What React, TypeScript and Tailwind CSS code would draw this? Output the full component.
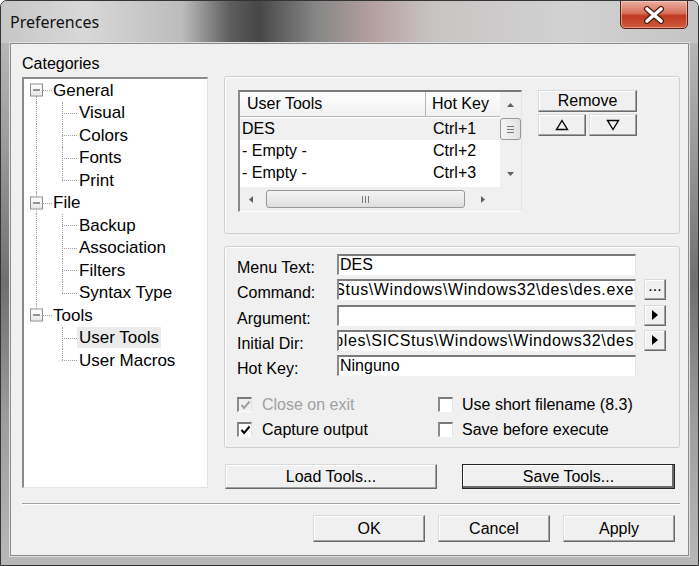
import React from "react";

type Dir = "up" | "down" | "left" | "right";

function Arrow({ dir, color = "#606060", size = 7 }: { dir: Dir; color?: string; size?: number }) {
  const h = Math.round(size * 0.57);
  if (dir === "up" || dir === "down") {
    const d = dir === "up" ? `M0 ${h}L${size / 2} 0L${size} ${h}Z` : `M0 0L${size / 2} ${h}L${size} 0Z`;
    return (
      <svg width={size} height={h} viewBox={`0 0 ${size} ${h}`} aria-hidden="true">
        <path d={d} fill={color} />
      </svg>
    );
  }
  const d = dir === "left" ? `M${h} 0L0 ${size / 2}L${h} ${size}Z` : `M0 0L${h} ${size / 2}L0 ${size}Z`;
  return (
    <svg width={h} height={size} viewBox={`0 0 ${h} ${size}`} aria-hidden="true">
      <path d={d} fill={color} />
    </svg>
  );
}

function Btn({
  children,
  className = "",
  isDefault = false,
}: {
  children: React.ReactNode;
  className?: string;
  isDefault?: boolean;
}) {
  const edge = isDefault
    ? "border border-[#262626] shadow-[inset_-2px_-2px_0_#6a6a6a,inset_1px_1px_0_#ffffff]"
    : "border border-t-[#dadada] border-l-[#dadada] border-r-[#6a6a6a] border-b-[#6a6a6a] shadow-[inset_-1px_-1px_0_#a0a0a0,inset_1px_1px_0_#ffffff]";
  return (
    <div className={`flex shrink-0 items-center justify-center bg-[#f0f0f0] text-[16px] text-black ${edge} ${className}`}>
      {children}
    </div>
  );
}

function Check({ checked, disabled = false }: { checked: boolean; disabled?: boolean }) {
  return (
    <span
      className={`flex h-[15px] w-[15px] shrink-0 items-center justify-center border-t-2 border-l-2 border-r border-b border-t-[#7a7a7a] border-l-[#8a8a8a] border-r-[#e3e3e3] border-b-[#ffffff] ${
        disabled ? "bg-[#f0f0f0]" : "bg-white"
      }`}
    >
      {checked ? (
        <svg width="11" height="10" viewBox="0 0 11 10" aria-hidden="true">
          <path
            d="M1.5 5 L4.2 8 L9.5 1.5"
            fill="none"
            stroke={disabled ? "#a0a0a0" : "#000"}
            strokeWidth="2"
          />
        </svg>
      ) : null}
    </span>
  );
}

function Field({ label, value, alignEnd = false, button }: { label: string; value: string; alignEnd?: boolean; button?: React.ReactNode }) {
  return (
    <div className="flex h-[25.25px] shrink-0 items-start">
      <div className="h-[24px] w-[112px] shrink-0 pl-[12px] pt-[3px] leading-[21px]">{label}</div>
      <div
        className={`flex h-[21px] w-[299px] shrink-0 items-center overflow-hidden whitespace-nowrap border-t-2 border-l-2 border-r border-b border-t-[#7a7a7a] border-l-[#8a8a8a] border-r-[#e3e3e3] border-b-[#ffffff] bg-white px-[1px] leading-none ${
          alignEnd ? "justify-end tracking-[0.6px]" : "justify-start"
        }`}
      >
        <span className="shrink-0">{value}</span>
      </div>
      {button ? <div className="ml-[8px]">{button}</div> : null}
    </div>
  );
}

const tree = [
  { label: "General", children: ["Visual", "Colors", "Fonts", "Print"] },
  { label: "File", children: ["Backup", "Association", "Filters", "Syntax Type"] },
  { label: "Tools", children: ["User Tools", "User Macros"] },
];

const dotV = "absolute w-0 border-l border-dotted border-[#a0a0a0]";
const dotH = "absolute top-1/2 h-0 border-t border-dotted border-[#a0a0a0]";

function TreeView() {
  return (
    <div className="mt-[3px] h-[411px] w-[186px] overflow-hidden border-t-2 border-l-2 border-r border-b border-t-[#8a8a8a] border-l-[#8a8a8a] border-r-[#e3e3e3] border-b-[#e3e3e3] bg-white text-[17px]">
      {tree.map((group, g) => {
        const lastGroup = g === tree.length - 1;
        return (
          <div key={group.label}>
            <div className="relative flex h-[22.5px] items-center pl-[29px]">
              {g === 0 ? <span className={`${dotV} left-[12px] top-[17px] bottom-0`} /> : null}
              {g > 0 && !lastGroup ? <span className={`${dotV} left-[12px] top-0 bottom-0`} /> : null}
              {lastGroup ? <span className={`${dotV} left-[12px] top-0 h-[5px]`} /> : null}
              <span className="absolute left-[6px] top-1/2 flex h-[13px] w-[13px] -translate-y-1/2 items-center justify-center border border-[#8f8f8f] bg-[linear-gradient(#ffffff,#e6e6e6)]">
                <span className="h-px w-[7px] bg-[#333]" />
              </span>
              <span className={`${dotH} left-[19px] w-[9px]`} />
              <span className="leading-none">{group.label}</span>
            </div>
            {group.children.map((child, i) => {
              const lastChild = i === group.children.length - 1;
              const selected = child === "User Tools";
              return (
                <div key={child} className="relative flex h-[22.5px] items-center pl-[53px]">
                  {!lastGroup ? <span className={`${dotV} left-[12px] top-0 bottom-0`} /> : null}
                  <span className={`${dotV} left-[38px] top-0 ${lastChild ? "h-1/2" : "bottom-0"}`} />
                  <span className={`${dotH} left-[38px] w-[15px]`} />
                  <span className={`flex h-[21px] items-center px-[2px] leading-none ${selected ? "bg-[#ebebeb]" : ""}`}>
                    {child}
                  </span>
                </div>
              );
            })}
          </div>
        );
      })}
    </div>
  );
}

function ListView() {
  const rows = [
    { name: "DES", key: "Ctrl+1", sel: true },
    { name: "- Empty -", key: "Ctrl+2", sel: false },
    { name: "- Empty -", key: "Ctrl+3", sel: false },
  ];
  return (
    <div className="flex h-[122px] w-[284px] shrink-0 flex-col border-t-2 border-l-2 border-r border-b border-t-[#7a7a7a] border-l-[#8a8a8a] border-r-[#e3e3e3] border-b-[#ffffff] bg-white">
      <div className="flex flex-1">
        <div className="flex w-[260px] flex-col overflow-hidden">
          <div className="flex h-[25px] shrink-0 border-b border-[#b5b5b5] bg-[linear-gradient(#ffffff,#f1f1f1)] leading-none">
            <div className="flex w-[186px] shrink-0 items-center border-r border-[#b5b5b5] pl-[7px]">User Tools</div>
            <div className="flex items-center whitespace-nowrap pl-[6px]">Hot Key</div>
          </div>
          <div className="mt-[1px]">
            {rows.map((r, i) => (
              <div key={i} className={`flex h-[22px] items-center leading-none ${r.sel ? "bg-[#f0f0f0]" : ""}`}>
                <div className="w-[187px] shrink-0 pl-[2px]">{r.name}</div>
                <div className="pl-[6px]">{r.key}</div>
              </div>
            ))}
          </div>
        </div>
        <div className="flex w-[21px] shrink-0 flex-col bg-[#f0f0f0]">
          <div className="flex h-[26px] items-center justify-center">
            <Arrow dir="up" />
          </div>
          <div className="flex h-[22px] items-center justify-center rounded-[3px] border border-[#979797] bg-[linear-gradient(90deg,#f5f5f5,#e1e1e1)]">
            <div className="flex flex-col gap-[2px]">
              <span className="h-px w-[7px] bg-[#7a7a7a]" />
              <span className="h-px w-[7px] bg-[#7a7a7a]" />
              <span className="h-px w-[7px] bg-[#7a7a7a]" />
            </div>
          </div>
          <div className="flex-1" />
          <div className="flex h-[26px] items-center justify-center">
            <Arrow dir="down" />
          </div>
        </div>
      </div>
      <div className="flex h-[24px] shrink-0 bg-[#f0f0f0]">
        <div className="flex w-[260px] items-center pr-[6px]">
          <div className="flex h-full w-[22px] items-center justify-center">
            <Arrow dir="left" />
          </div>
          <div className="ml-[4px] flex h-[18px] w-[199px] items-center justify-center rounded-[3px] border border-[#979797] bg-[linear-gradient(#f5f5f5,#dedede)]">
            <div className="flex gap-[2px]">
              <span className="h-[7px] w-px bg-[#7a7a7a]" />
              <span className="h-[7px] w-px bg-[#7a7a7a]" />
              <span className="h-[7px] w-px bg-[#7a7a7a]" />
            </div>
          </div>
          <div className="flex-1" />
          <div className="flex h-full w-[22px] items-center justify-center">
            <Arrow dir="right" />
          </div>
        </div>
        <div className="w-[21px] bg-[#f0f0f0]" />
      </div>
    </div>
  );
}

export default function App() {
  return (
    <div className="flex h-[566px] w-[699px] flex-col overflow-hidden rounded-t-[7px] border border-[#343434] bg-[linear-gradient(180deg,#c2c2c2_0%,#9c9c9c_25%,#6f6f6f_50%,#9e9e9e_75%,#b8b8b8_100%)] font-['Liberation_Sans',Arial,sans-serif] text-[16px] text-black">
      <div className="flex h-[42px] shrink-0 items-start justify-between bg-[linear-gradient(90deg,#c6c6c6_0%,#d8d8d8_12%,#bcbcbc_26%,#5c5c5c_33%,#474747_37%,#858585_45%,#b8a2a2_54%,#c8c4c4_62%,#d2d2d2_82%,#c4c4c4_100%)]">
        <div className="self-center pl-[9px] font-['Noto_Sans',sans-serif] text-[16px] leading-none text-[#111]">Preferences</div>
        <div className="-mt-px mr-[10px] flex h-[29px] w-[68px] items-center justify-center rounded-b-[5px] border border-[#5a1d12] bg-[linear-gradient(#eab0a2_0%,#d8705a_45%,#c13a22_55%,#cf5a3c_100%)] shadow-[inset_0_0_0_1px_rgba(255,220,210,0.5)]">
          <svg width="26" height="18" viewBox="0 0 26 18" aria-hidden="true">
            <path d="M6 3 L20 15 M20 3 L6 15" stroke="#4a1a10" strokeWidth="6" strokeLinecap="round" />
            <path d="M6 3 L20 15 M20 3 L6 15" stroke="#ffffff" strokeWidth="3.6" strokeLinecap="round" />
          </svg>
        </div>
      </div>

      <div className="mx-[9px] flex h-[513px] shrink-0 flex-col border border-[#8c8c8c] bg-[#f0f0f0] shadow-[0_0_0_1px_#dedede]">
        <div className="flex pl-[11px]">
          <div className="flex w-[186px] shrink-0 flex-col">
            <div className="mt-[10px] h-[20px] leading-[20px]">Categories</div>
            <TreeView />
          </div>

          <div className="ml-[16px] flex w-[456px] shrink-0 flex-col pt-[32px]">
            <div className="flex h-[158px] items-start rounded-[3px] border border-[#cfcfcf] pl-[13px] pt-[13px] shadow-[inset_1px_1px_0_#ffffff]">
              <ListView />
              <div className="ml-[16px] flex flex-col">
                <Btn className="h-[22px] w-[99px]">Remove</Btn>
                <div className="mt-[2px] flex gap-[3px]">
                  <Btn className="h-[22px] w-[48px]">
                    <svg width="14" height="12" viewBox="0 0 14 12" aria-hidden="true">
                      <path d="M7 1.5 L12.5 10.5 L1.5 10.5 Z" fill="none" stroke="#000" strokeWidth="1.4" strokeLinejoin="miter" />
                    </svg>
                  </Btn>
                  <Btn className="h-[22px] w-[48px]">
                    <svg width="14" height="12" viewBox="0 0 14 12" aria-hidden="true">
                      <path d="M1.5 1.5 L12.5 1.5 L7 10.5 Z" fill="none" stroke="#000" strokeWidth="1.4" strokeLinejoin="miter" />
                    </svg>
                  </Btn>
                </div>
              </div>
            </div>

            <div className="mt-[12px] flex h-[202px] flex-col rounded-[3px] border border-[#cfcfcf] shadow-[inset_1px_1px_0_#ffffff]">
              <div className="mt-[7px] flex h-[123px] flex-col overflow-hidden">
                <Field label="Menu Text:" value="DES" />
                <Field
                  label="Command:"
                  value="Stus\Windows\Windows32\des\des.exe"
                  alignEnd
                  button={<Btn className="h-[21px] w-[22px] items-end pb-[5px] text-[11px] leading-none">...</Btn>}
                />
                <Field
                  label="Argument:"
                  value=""
                  button={
                    <Btn className="h-[21px] w-[22px]">
                      <Arrow dir="right" color="#000" size={10} />
                    </Btn>
                  }
                />
                <Field
                  label="Initial Dir:"
                  value="ples\SICStus\Windows\Windows32\des"
                  alignEnd
                  button={
                    <Btn className="h-[21px] w-[22px]">
                      <Arrow dir="right" color="#000" size={10} />
                    </Btn>
                  }
                />
                <Field label="Hot Key:" value="Ninguno" />
              </div>

              <div className="mt-[15px] grid grid-cols-[201px_1fr] pl-[12px]">
                <div className="flex h-[25px] items-center gap-[10px] text-[#a0a0a0]">
                  <Check checked disabled />
                  <span className="leading-none">Close on exit</span>
                </div>
                <div className="flex h-[25px] items-center gap-[9px]">
                  <Check checked={false} />
                  <span className="leading-none">Use short filename (8.3)</span>
                </div>
                <div className="flex h-[25px] items-center gap-[10px]">
                  <Check checked />
                  <span className="leading-none">Capture output</span>
                </div>
                <div className="flex h-[25px] items-center gap-[9px]">
                  <Check checked={false} />
                  <span className="leading-none">Save before execute</span>
                </div>
              </div>
            </div>

            <div className="mt-[16px] flex gap-[25px] pl-[1px]">
              <Btn className="h-[25px] w-[212px]">Load Tools...</Btn>
              <Btn className="h-[25px] w-[213px]" isDefault>
                Save Tools...
              </Btn>
            </div>
          </div>
        </div>

        <div className="ml-[11px] mt-[14px] h-0 w-[658px] border-t border-b border-t-[#a0a0a0] border-b-white" />

        <div className="mt-[10px] flex justify-end gap-[13px] pr-[13px]">
          <Btn className="h-[27px] w-[112px]">OK</Btn>
          <Btn className="h-[27px] w-[112px]">Cancel</Btn>
          <Btn className="h-[27px] w-[112px]">Apply</Btn>
        </div>
      </div>
    </div>
  );
}
